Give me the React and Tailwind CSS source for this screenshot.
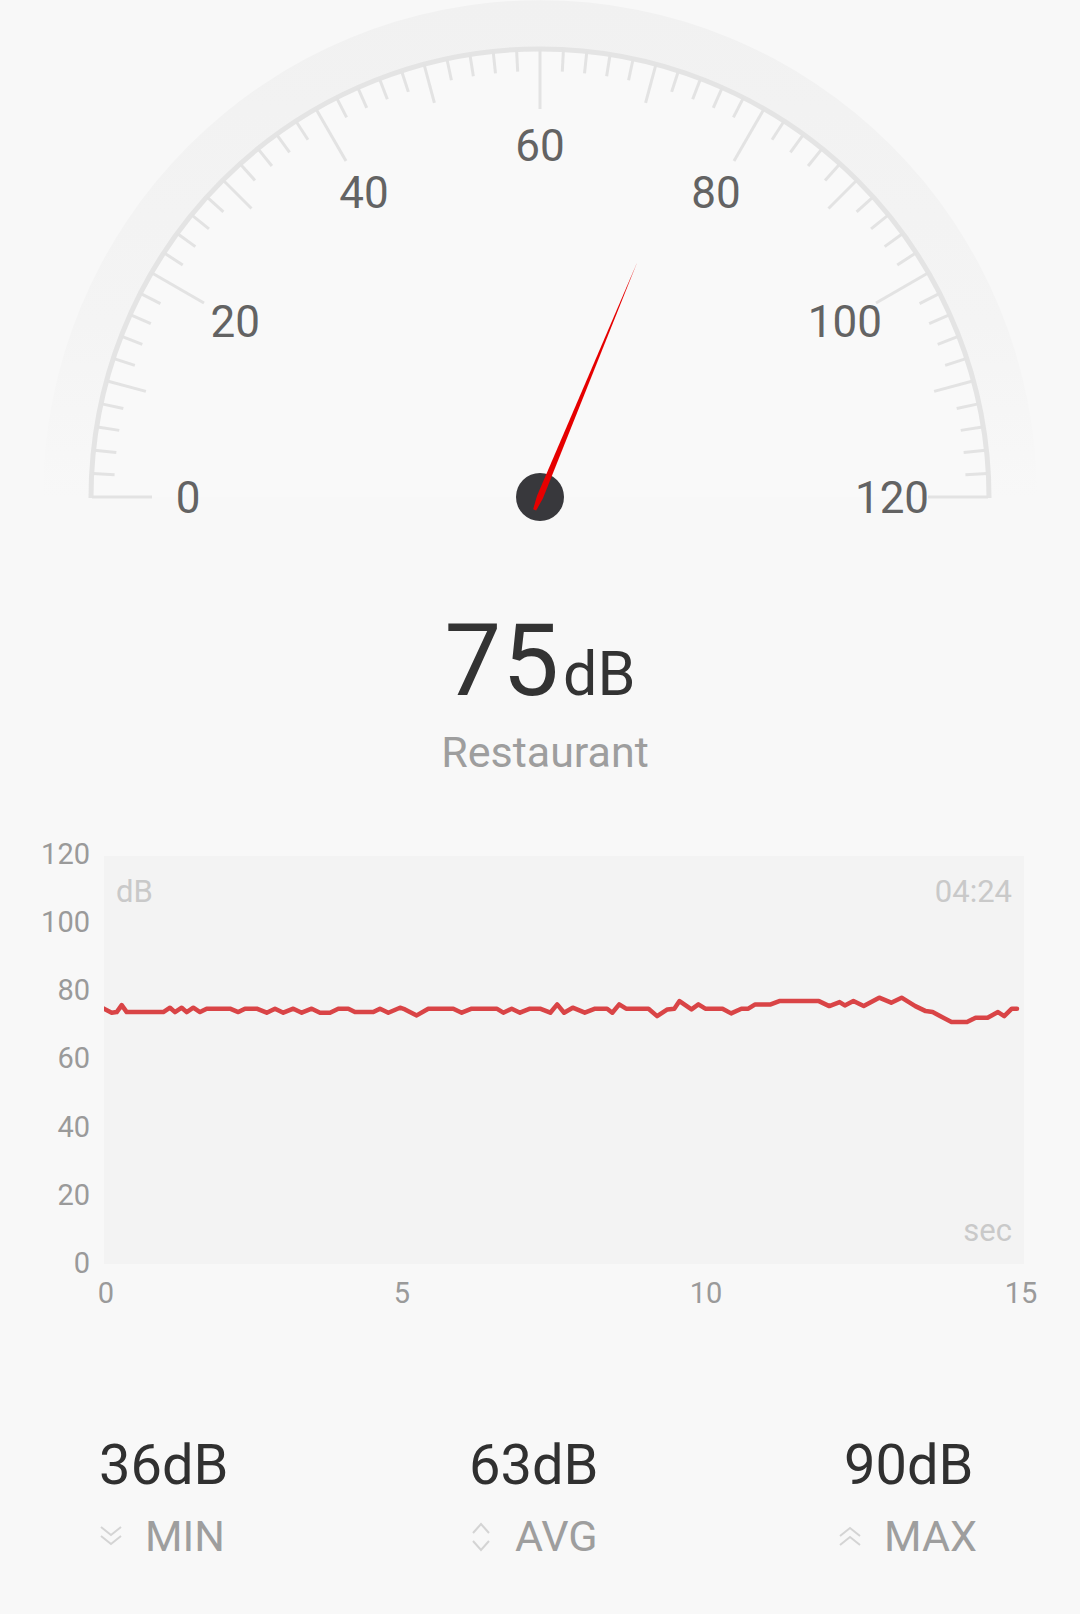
import React from "react";

const CX = 540;
const CY = 497;

function polar(r, v) {
  const a = ((180 - v * 1.5) * Math.PI) / 180;
  return [CX + r * Math.cos(a), CY - r * Math.sin(a)];
}

// readings of the last 15 seconds, in page pixels
const TRACE = [
  [104, 1009.3], [111.7, 1013.3], [116.7, 1012.7], [121.7, 1005.7], [126.7, 1012.7],
  [163.3, 1012.7], [170, 1008.3], [175, 1012.7], [181.7, 1008.3], [186.7, 1012.7],
  [193.3, 1008.3], [200, 1012.7], [206.7, 1009.3], [230, 1009.3], [238.3, 1012.7],
  [245, 1009.3], [256.7, 1009.3], [266.7, 1013.3], [275, 1009.3], [283.3, 1013.3],
  [293.3, 1009.3], [301.7, 1013.3], [311.7, 1009.3], [320, 1013.3], [330, 1013.3],
  [338.3, 1009.3], [348.3, 1009.3], [355, 1012.7], [373.3, 1012.7], [380, 1009.3],
  [388.3, 1013.3], [400, 1008.3], [405, 1010], [416.7, 1016], [428.3, 1009.3],
  [453.3, 1009.3], [461.7, 1013.3], [471.7, 1009.3], [496.7, 1009.3], [503.3, 1013.3],
  [511.7, 1009.3], [520, 1013.3], [530, 1009.3], [540, 1009.3], [550.3, 1013.3],
  [557.2, 1005], [564.1, 1013.3], [572.7, 1008.3], [584.8, 1013.3], [595.1, 1009.3],
  [607.1, 1009.3], [612.3, 1013.3], [619.2, 1005], [626.1, 1009.3], [648.5, 1009.3],
  [657.1, 1016.7], [667.4, 1010], [674.3, 1009.3], [679.5, 1001.7], [691.5, 1010],
  [698.4, 1005], [705.3, 1009.3], [722.5, 1009.3], [731.1, 1014], [741.4, 1009.3],
  [748.3, 1009.3], [755.2, 1005], [770.7, 1005], [779.3, 1001.7], [818.9, 1001.7],
  [829.3, 1006.7], [839.6, 1002.7], [844.8, 1006], [853.4, 1001.7], [863.7, 1006.7],
  [879.2, 998.3], [891.2, 1003.3], [901.6, 998.3], [915.3, 1006.7], [925.7, 1011.7],
  [932.6, 1012.7], [951.5, 1022.7], [967, 1022.7], [975.6, 1018.3], [987.6, 1018.3],
  [998, 1012.7], [1004.2, 1016.7], [1011.8, 1009.3], [1017, 1009.3],
];

function Gauge({ value }) {
  const ticks = [];
  for (let v = 0; v <= 120; v += 2) {
    const len = v % 20 === 0 ? 60 : v % 10 === 0 ? 40 : 22;
    const [x1, y1] = polar(448, v);
    const [x2, y2] = polar(448 - len, v);
    ticks.push(
      <line key={v} x1={x1} y1={y1} x2={x2} y2={y2} stroke="#e3e3e3" strokeWidth="3" />
    );
  }

  const labels = [0, 20, 40, 60, 80, 100, 120].map((v) => {
    const [x, y] = polar(352, v);
    return (
      <text
        key={v}
        x={x}
        y={y + 15.5}
        textAnchor="middle"
        fontFamily="Roboto, sans-serif"
        fontSize="44"
        fill="#636363"
      >
        {v}
      </text>
    );
  });

  const [tx, ty] = polar(254, value);
  const dx = (tx - CX) / 254;
  const dy = (ty - CY) / 254;
  const px = -dy;
  const py = dx;
  const needle = [
    [tx, ty],
    [CX + 3.2 * px, CY + 3.2 * py],
    [CX - 14 * dx + 1.6 * px, CY - 14 * dy + 1.6 * py],
    [CX - 14 * dx - 1.6 * px, CY - 14 * dy - 1.6 * py],
    [CX - 3.2 * px, CY - 3.2 * py],
  ]
    .map((p) => p.join(","))
    .join(" ");

  return (
    <svg width="1080" height="530" viewBox="0 0 1080 530" className="block">
      <defs>
        <linearGradient id="band" x1="0" y1="0" x2="0" y2="1">
          <stop offset="0" stopColor="#f1f1f1" />
          <stop offset="0.65" stopColor="#f4f4f4" />
          <stop offset="1" stopColor="#f8f8f8" />
        </linearGradient>
      </defs>
      <path d={`M ${CX - 497} ${CY} A 497 497 0 0 1 ${CX + 497} ${CY} Z`} fill="url(#band)" />
      <path d={`M ${CX - 448} ${CY} A 448 448 0 0 1 ${CX + 448} ${CY} Z`} fill="#f9f9f9" />
      <path
        d={`M ${CX - 449} ${CY + 1} A 449 449 0 0 1 ${CX + 449} ${CY + 1}`}
        fill="none"
        stroke="#e4e4e4"
        strokeWidth="5"
      />
      {ticks}
      {labels}
      <circle cx={CX} cy={CY} r="24" fill="#38383c" />
      <polygon points={needle} fill="#e60000" />
    </svg>
  );
}

function Chart() {
  const pts = TRACE.map(([x, y]) => `${x - 104},${y - 856.6}`).join(" ");
  return (
    <div className="mt-[65px]">
      <div className="flex">
        <div className="flex h-[439px] w-[104px] flex-col justify-between pr-[14px] text-right text-[29px] leading-[30px] text-[#9a9a9a]">
          {[120, 100, 80, 60, 40, 20, 0].map((v) => (
            <span key={v}>{v}</span>
          ))}
        </div>
        <div className="relative mt-[17px] flex h-[408px] w-[920px] flex-col justify-between bg-[#f3f3f3] px-[12px] pb-[17px] pt-[20px] text-[31px] leading-[32px] text-[#c9c9c9]">
          <svg
            width="920"
            height="408"
            viewBox="0 0 920 408"
            className="absolute inset-0"
          >
            <polyline
              points={pts}
              fill="none"
              stroke="#d94446"
              strokeWidth="4.5"
              strokeLinejoin="round"
              strokeLinecap="round"
            />
          </svg>
          <div className="flex justify-between">
            <span>dB</span>
            <span>04:24</span>
          </div>
          <div className="flex justify-end">
            <span>sec</span>
          </div>
        </div>
      </div>
      <div className="flex text-center text-[29px] leading-[30px] text-[#9a9a9a]">
        <span className="ml-[86px] w-[40px]">0</span>
        <span className="ml-[256px] w-[40px]">5</span>
        <span className="ml-[264px] w-[40px]">10</span>
        <span className="ml-[275px] w-[40px]">15</span>
      </div>
    </div>
  );
}

function DoubleDown() {
  return (
    <svg width="24" height="26" viewBox="0 0 24 26" fill="none" stroke="#d4d4d4" strokeWidth="2">
      <path d="M2 3 L12 11 L22 3" />
      <path d="M2 12 L12 20 L22 12" />
    </svg>
  );
}

function UpDown() {
  return (
    <svg width="24" height="30" viewBox="0 0 24 30" fill="none" stroke="#d4d4d4" strokeWidth="2">
      <path d="M4 11 L12 2 L20 11" />
      <path d="M4 19 L12 28 L20 19" />
    </svg>
  );
}

function DoubleUp() {
  return (
    <svg width="24" height="22" viewBox="0 0 24 22" fill="none" stroke="#d4d4d4" strokeWidth="2">
      <path d="M2 10 L12 2 L22 10" />
      <path d="M2 19 L12 11 L22 19" />
    </svg>
  );
}

function Stat({ value, label, icon, className, rowClass = "" }) {
  return (
    <div className={className}>
      <div className="text-[56px] leading-none text-[#303030]">{value}dB</div>
      <div
        className={`mt-[22px] flex items-center gap-[22px] text-[43px] leading-none text-[#9e9e9e] ${rowClass}`}
      >
        {icon}
        <span>{label}</span>
      </div>
    </div>
  );
}

export default function App() {
  return (
    <div className="min-h-[1614px] w-[1080px] overflow-hidden bg-[#f8f8f8] font-['Roboto',sans-serif]">
      <Gauge value={75} />

      <div className="mt-[80px] flex items-baseline justify-center">
        <span className="text-[101px] leading-none tracking-[1px] text-[#333333]">75</span>
        <span className="ml-[3px] text-[61px] leading-none text-[#333333]">dB</span>
      </div>
      <div className="mt-[20px] pl-[10px] text-center text-[43px] leading-none text-[#9e9e9e]">
        Restaurant
      </div>

      <Chart />

      <div className="mt-[129px] flex pl-[99px]">
        <Stat className="w-[370px]" value={36} label="MIN" icon={<DoubleDown />} />
        <Stat className="w-[376px]" value={63} label="AVG" icon={<UpDown />} />
        <Stat
          className="ml-[-1px]"
          rowClass="ml-[-6px]"
          value={90}
          label="MAX"
          icon={<DoubleUp />}
        />
      </div>
    </div>
  );
}
